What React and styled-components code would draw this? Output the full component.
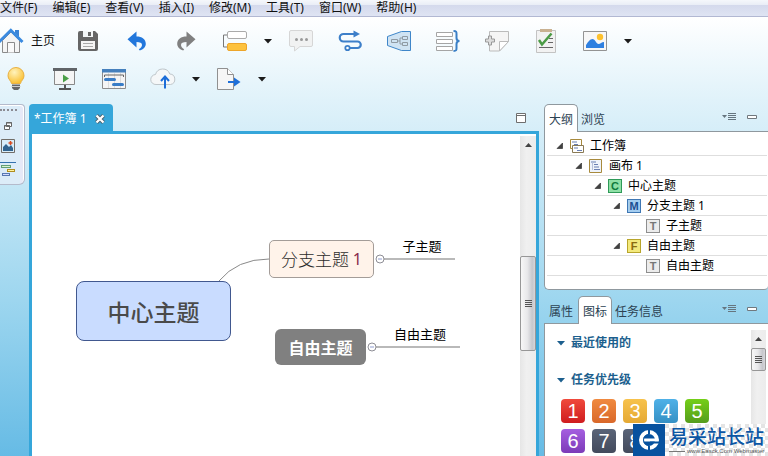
import React from "react";
import styled, { createGlobalStyle, css } from "styled-components";

const UI_FONT = '"Noto Sans", "Noto Sans CJK SC", sans-serif';
const CJK_FONT = '"Noto Sans CJK SC", "Noto Sans", sans-serif';
const ACCENT = "#35a6da";

const GlobalStyle = createGlobalStyle`
  *, *::before, *::after { box-sizing: border-box; }
  body { margin: 0; font: 12px/16px ${UI_FONT}; color: #111; overflow: hidden; }
  button { font: inherit; color: inherit; background: none; border: 0; padding: 0; margin: 0; white-space: nowrap; }
  ul { list-style: none; margin: 0; padding: 0; }
  h2 { margin: 0; }
  svg { display: block; flex: none; }
`;

const Window = styled.div`
  position: relative;
  display: flex;
  flex-direction: column;
  height: 100vh;
  overflow: hidden;
  background: linear-gradient(#ffffff 17px, #e0f2fa 100px, #9dd6ef 66%, #66bbe5);
`;

/* ---------- menu and toolbars ---------- */

const MenuBar = styled.nav`
  display: flex;
  gap: 15px;
  height: 17px;
  flex: none;
  overflow: hidden;
  background: linear-gradient(#f5f7fb, #e9edf6 5px, #d4d9ec 5px, #dfe4f3);
  border-bottom: 1px solid #b2b8d2;
`;

const MenuItem = styled.button`
  height: 16px;
  line-height: 16px;
`;

const Toolbars = styled.div`
  display: flex;
  flex-direction: column;
  flex: none;
  padding: 5px 0 6px;
`;

const ToolRow = styled.div`
  display: flex;
  align-items: center;
  gap: 25px;
  height: 38px;
  padding-left: ${(p) => p.$inset}px;
`;

const ToolButton = styled.button`
  display: flex;
  align-items: center;
  justify-content: center;
  width: 24px;
  height: 26px;
`;

const HomeButton = styled.button`
  display: flex;
  align-items: center;
  gap: 7px;
  height: 26px;
  width: 51px;
  flex: none;
`;

const SplitButton = styled.div`
  display: flex;
  align-items: center;
  gap: 17px;
  margin-right: -8px;
`;

const ArrowButton = styled.button`
  display: flex;
  align-items: center;
  justify-content: center;
  width: 8px;
  height: 26px;
`;

/* ---------- workspace ---------- */

const Workspace = styled.main`
  display: grid;
  grid-template-columns: 25px minmax(0, 1fr) 224px;
  flex: 1;
  min-height: 0;
`;

const Rail = styled.aside`
  display: flex;
  flex-direction: column;
  align-self: start;
  gap: 9px;
  padding: 4px 0 7px;
  background: linear-gradient(90deg, #dcecf8 20px, #e6e9f7 20px);
  border: 1px solid #b4bacb;
  border-left: 0;
  border-radius: 0 4px 6px 0;
  box-shadow: inset -1px 1px 0 #fff;
`;

const Grip = styled.div`
  width: 17px;
  height: 4px;
  border-top: 2px dotted #8b8b93;
`;

const RailButton = styled.button`
  display: flex;
  align-items: center;
  justify-content: center;
  width: 16px;
  height: ${(p) => p.$h}px;
`;

const Column = styled.section`
  display: flex;
  flex-direction: column;
  min-width: 0;
  min-height: 0;
`;

const EditorColumn = styled(Column)`
  padding: 0 5px 0 4px;
`;

const EditorTabs = styled.div`
  display: flex;
  justify-content: space-between;
  align-items: center;
  height: 27px;
  flex: none;
  padding-right: 13px;
`;

const EditorTab = styled.div`
  display: flex;
  align-items: center;
  gap: 8px;
  height: 27px;
  padding: 2px 8px 0 5px;
  border-radius: 4px 4px 0 0;
  background: ${ACCENT};
  color: #fff;
`;

const IconButton = styled.button`
  display: flex;
  align-items: center;
  justify-content: center;
`;

const EditorFrame = styled.div`
  display: flex;
  flex: 1;
  min-height: 0;
  background: #fff;
  border: 3px solid ${ACCENT};
  border-bottom: 0;
`;

const Canvas = styled.div`
  position: relative;
  flex: 1;
  min-width: 0;
  overflow: hidden;
  font-family: ${CJK_FONT};
`;

const Links = styled.svg`
  position: absolute;
  left: 0;
  top: 0;
`;

const nodeKinds = {
  central: css`
    background: #c9dcff;
    border: 1px solid #41588f;
    border-radius: 8px;
    color: #4a4a4a;
    font: 500 23px/32px ${CJK_FONT};
  `,
  branch: css`
    background: #fff3ea;
    border: 1px solid #a39c98;
    border-radius: 5px;
    color: #2c2c2c;
    font: 300 17px/24px ${CJK_FONT};
  `,
  floating: css`
    background: #808080;
    border-radius: 6px;
    color: #fff;
    font: 700 16px/24px ${CJK_FONT};
  `,
  leaf: css`
    color: #000;
    font: 400 13px/18px ${CJK_FONT};
  `,
};

const Node = styled.div`
  position: absolute;
  left: ${(p) => p.$x}px;
  top: ${(p) => p.$y}px;
  width: ${(p) => p.$w}px;
  height: ${(p) => p.$h}px;
  display: flex;
  align-items: center;
  justify-content: center;
  white-space: pre;
  ${(p) => nodeKinds[p.$kind]}
`;

const Numeral = styled.span`
  color: #8a2c4c;
  font: 400 16px/24px "Noto Sans", sans-serif;
`;

const ScrollTrack = styled.div`
  display: flex;
  flex-direction: column;
  align-items: center;
  flex: none;
  width: ${(p) => p.$w}px;
  margin-top: 2px;
  background: linear-gradient(90deg, #e6e6e6, #f0f0f0 40%, #ececec);
`;

const ScrollArrow = styled.button`
  display: flex;
  align-items: center;
  justify-content: center;
  width: 100%;
  height: 18px;
  flex: none;
`;

const ScrollThumb = styled.div`
  display: flex;
  align-items: center;
  justify-content: center;
  width: 100%;
  height: ${(p) => p.$h}px;
  margin-top: ${(p) => p.$gap}px;
  flex: none;
  border: 1px solid #979797;
  border-radius: 2px;
  background: linear-gradient(90deg, #f7f7f7, #e8e8ea 45%, #c6c7cc 80%, #d6d6da);
`;

/* ---------- side views ---------- */

const SideColumn = styled(Column)`
  gap: 6px;
`;

const View = styled.div`
  display: flex;
  flex-direction: column;
  min-height: 0;
  flex: ${(p) => (p.$fill ? 1 : "none")};
`;

const ViewHeader = styled.div`
  display: flex;
  align-items: stretch;
  height: 28px;
  flex: none;
  margin-bottom: -1px;
  color: #2c4252;
`;

const ViewTab = styled.button`
  height: 28px;
  padding: 3px ${(p) => p.$pad}px 0;
  border: 1px solid transparent;
  border-width: 1px ${(p) => (p.$active ? 1 : 0)}px 0;
  ${(p) =>
    p.$active &&
    css`
      background: #fff;
      border-color: #8f989e;
      border-radius: 5px 5px 0 0;
      position: relative;
      z-index: 1;
    `}
`;

const ViewTools = styled.div`
  display: flex;
  align-items: center;
  gap: 11px;
  margin-left: auto;
  padding: 0 11px 2px 0;
`;

const ViewBody = styled.div`
  display: flex;
  min-height: 0;
  flex: ${(p) => (p.$fill ? 1 : "none")};
  background: #fff;
  border: 1px solid #8f989e;
  border-right: 0;
  border-bottom-width: ${(p) => (p.$fill ? 0 : 1)}px;
  border-radius: ${(p) => (p.$fill ? "0" : "0 0 4px 5px")};
  padding: ${(p) => (p.$fill ? "4px 2px 0 0" : "4px 1px 13px 2px")};
`;

const Tree = styled.ul`
  flex: 1;
  color: #000;
`;

const TreeRow = styled.li`
  display: flex;
  align-items: center;
  height: 20px;
  padding-left: ${(p) => 9 + p.$level * 19}px;
  border-bottom: 1px solid #dedede;
`;

const Twisty = styled.span`
  display: flex;
  width: 14px;
`;

const TreeIcon = styled.span`
  display: flex;
  width: 20px;
`;

const tagColors = {
  C: ["#8fe0a6", "#2f9a58", "#0e7a3c"],
  M: ["#a4cdf0", "#3f77b3", "#1c4f92"],
  F: ["#f3e97c", "#b8a52c", "#8a6a10"],
  T: ["#ececec", "#8e8e8e", "#777777"],
};

const Tag = styled.b`
  width: 14px;
  height: 14px;
  border: 1px solid ${(p) => tagColors[p.$t][1]};
  background: ${(p) => tagColors[p.$t][0]};
  color: ${(p) => tagColors[p.$t][2]};
  font: 700 11px/12px "Liberation Sans", sans-serif;
  text-align: center;
`;

const MarkerList = styled.div`
  flex: 1;
  min-width: 0;
  padding: 7px 0 0 12px;
  overflow: hidden;
`;

const MarkerHeading = styled.h2`
  display: flex;
  align-items: center;
  gap: 6px;
  height: 16px;
  margin-bottom: ${(p) => p.$gap}px;
  color: #1c5f8e;
  font: 700 12px/16px ${UI_FONT};
`;

const Markers = styled.div`
  display: grid;
  grid-template-columns: repeat(5, 24px);
  gap: 6px 7px;
  padding-left: 4px;
`;

const Marker = styled.button`
  width: 24px;
  height: 24px;
  border-radius: 4px;
  background: linear-gradient(${(p) => p.$from}, ${(p) => p.$to});
  color: #fff;
  font: 400 20px/24px "Liberation Sans", sans-serif;
`;

const Brand = styled.div`
  position: absolute;
  right: 0;
  bottom: 0;
  z-index: 2;
  display: flex;
  height: 32px;
`;

const BrandText = styled.div`
  width: 103px;
  padding-left: 4px;
  background: repeating-conic-gradient(#ffffff 0 25%, #e4e4e4 0 50%) 0 0 / 8px 8px;
  white-space: nowrap;
`;

const BrandName = styled.div`
  color: #0b56a4;
  font: 500 19px/23px ${CJK_FONT};
`;

const BrandUrl = styled.div`
  display: flex;
  align-items: center;
  gap: 2px;
  color: #555;
  font: 6px/8px "Liberation Sans", sans-serif;

  &::before {
    content: "";
    width: 16px;
    height: 1px;
    background: #777;
  }
`;

/* ---------- icons ---------- */

const Caret = ({ color = "#1b1b1b" }) => (
  <svg width="8" height="5" viewBox="0 0 8 5"><path d="M0 0h8L4 4.5z" fill={color} /></svg>
);

const HomeIcon = () => (
  <svg width="24" height="26" viewBox="0 0 24 26">
    <path d="M2.500 12.500 11 4l8.500 8.500V24.500h-17z" fill="#f4f4f4" stroke="#8b8b8b" />
    <path d="M7.500 24.500v-10h7v10" fill="#fafafa" stroke="#8b8b8b" />
    <path d="M15 2h4v7l-4-4z" fill="#3b84d6" />
    <path d="M-1 14 10.800 2.300 22.500 14" fill="none" stroke="#3a8ae0" strokeWidth="3" />
  </svg>
);

const SaveIcon = () => (
  <svg width="20" height="20" viewBox="0 0 20 20">
    <path d="M2 0h15l3 3v15a2 2 0 0 1-2 2H2a2 2 0 0 1-2-2V2a2 2 0 0 1 2-2z" fill="#666" />
    <path d="M5 0h10v6H5z" fill="#f3f6f7" /><path d="M10 1h3v4h-3z" fill="#666" />
    <path d="M3 10h14v8H3z" fill="#f5f5f5" /><path d="M5 12.500h10M5 15.500h10" stroke="#aaa" />
  </svg>
);

const UndoIcon = ({ color, flip }) => (
  <svg width="20" height="20" viewBox="0 0 20 20">
    <path
      transform={flip ? "translate(20 0) scale(-1 1)" : undefined}
      d="M9.500.5v5c5.500 0 9.300 2.700 9.300 7.300 0 3.200-2.500 5.900-6 6.700l-1-1.200c2.200-1.300 3.200-2.800 3.200-4.300 0-2.200-2-3-5.500-3v5.500L.5 8.300z"
      fill={color}
    />
  </svg>
);

const TopicIcon = () => (
  <svg width="24" height="22" viewBox="0 0 24 22">
    <path d="M5 5H.5v12H5" fill="none" stroke="#777" />
    <rect x="4.500" y="1.500" width="19" height="7" rx="1.500" fill="#fff" stroke="#aaa" />
    <rect x="4.500" y="13.500" width="19" height="7" rx="1.500" fill="#fdc23e" stroke="#eda52a" />
  </svg>
);

const CommentIcon = () => (
  <svg width="24" height="22" viewBox="0 0 24 22">
    <path d="M2 .5h20a1.500 1.500 0 0 1 1.500 1.500v13a1.500 1.500 0 0 1-1.500 1.500H11L5.500 21v-4.500H2A1.500 1.500 0 0 1 .5 15V2A1.500 1.500 0 0 1 2 .5z" fill="#f1f2f2" stroke="#d6d6d6" />
    <g fill="#999"><circle cx="7.500" cy="9.500" r="1.500" /><circle cx="12.500" cy="9.500" r="1.500" /><circle cx="17.500" cy="9.500" r="1.500" /></g>
  </svg>
);

const RelationIcon = () => (
  <svg width="24" height="22" viewBox="0 0 24 22">
    <path d="M17 4H5.500a3.500 3.500 0 0 0 0 7.500h14a3 3 0 0 1 0 6.500H12" fill="none" stroke="#3d7fc9" strokeWidth="2.200" />
    <path d="M15.500.5 22 4l-6.500 3.500z" fill="#3d7fc9" />
    <circle cx="9.500" cy="18" r="2.200" fill="#fff" stroke="#3d7fc9" strokeWidth="1.800" />
  </svg>
);

const BoundaryIcon = () => (
  <svg width="24" height="20" viewBox="0 0 24 20">
    <path d="M.5 5.500 14.500.5h9v19h-9l-14-5z" fill="#cfe3f3" stroke="#3f86c9" />
    <path d="M4.500 8.500h6v3h-6zM15.500 5.500h5v3h-5zM15.500 11.500h5v3h-5zM10.500 10h2.500M15.500 7H13v6h2.500" fill="none" stroke="#8f9aa3" />
  </svg>
);

const SummaryIcon = () => (
  <svg width="25" height="22" viewBox="0 0 25 22">
    <path d="M.5 2.500h16v4H.5zM.5 9.500h16v4H.5zM.5 16.500h16v4H.5z" fill="#fff" stroke="#a5a5a5" />
    <path d="M17.500 1c3 0 3 1 3 3v4q0 3 3 3-3 0-3 3v4c0 2 0 3-3 3" fill="none" stroke="#3a7fc6" strokeWidth="2" />
  </svg>
);

const NoteIcon = () => (
  <svg width="24" height="21" viewBox="0 0 24 21">
    <path d="M4.500.5h19v10l-9 9.500h-10z" fill="#f5f5f5" stroke="#bbb" />
    <path d="M14.500 20V10.500h9z" fill="#fff" stroke="#bbb" />
    <path d="M3.500 5v3h-3v3h3v3h3v-3h3V8h-3V5z" fill="#ddd" stroke="#999" />
  </svg>
);

const TaskIcon = () => (
  <svg width="20" height="26" viewBox="0 0 20 26">
    <path d="M.5 2.500h19v22H.5z" fill="#f2f2f2" stroke="#c3c3c3" />
    <path d="M4 1h12v3H4z" fill="#c9b191" />
    <path d="m3 12 3 4.500 9.500-11" fill="none" stroke="#4b9b45" strokeWidth="2.500" />
    <path d="M13 10.500h4M12 14.500h5M3 19.500h14" stroke="#666" />
  </svg>
);

const ImageIcon = () => (
  <svg width="24" height="20" viewBox="0 0 24 20">
    <path d="M.5.5h23v19H.5z" fill="#f7f7f7" stroke="#939393" />
    <path d="M3 17v-3c2-3 4-6 6.500-6s4 5 6 5 3-2 5.500-2v6z" fill="#2f80e0" />
    <circle cx="17" cy="6" r="3.200" fill="#fdc12e" />
  </svg>
);

const BulbIcon = () => (
  <svg width="18" height="24" viewBox="0 0 18 24">
    <defs>
      <radialGradient id="glow" cx=".4" cy=".3" r=".8"><stop offset="0" stopColor="#fff3bd" /><stop offset="1" stopColor="#f9b91f" /></radialGradient>
    </defs>
    <path d="M9 .5a8 8 0 0 1 8 8.300c0 3.500-3 4.800-3.500 7.700h-9C4 13.600 1 12.300 1 8.800A8 8 0 0 1 9 .5z" fill="url(#glow)" stroke="#e8b043" />
    <path d="M5 17.500h8v3.500l-2 2H7l-2-2z" fill="#666" /><path d="M4.500 19.500h9" stroke="#ccc" />
  </svg>
);

const PresentIcon = () => (
  <svg width="24" height="22" viewBox="0 0 24 22">
    <path d="M1.500 2.500h20v14h-20z" fill="#f5f5f5" stroke="#888" />
    <path d="M0 0h24v3H0z" fill="#606468" /><path d="m10 6.500 6 4-6 4z" fill="#4c9f48" />
    <path d="M12 17v4M6 21h12" stroke="#555" strokeWidth="2" />
  </svg>
);

const GanttIcon = () => (
  <svg width="24" height="20" viewBox="0 0 24 20">
    <path d="M.5.5h23v19H.5z" fill="#f5f5f5" stroke="#8c8c8c" />
    <path d="M6.500 4v15M12.500 4v15M18.500 4v15" stroke="#ddd" />
    <path d="M0 0h24v3.500H0z" fill="#4580bd" /><path d="M2.500 8V6h19v2" fill="none" stroke="#666" />
    <path d="M3.500 10.500h9M11.500 15.500h9" stroke="#397dc7" strokeWidth="3" strokeLinecap="round" />
  </svg>
);

const CloudIcon = () => (
  <svg width="26" height="22" viewBox="0 0 26 22">
    <path d="M6 16.500a5 5 0 0 1-.5-10A7.500 7.500 0 0 1 19.800 6a5.300 5.300 0 0 1 .7 10.500z" fill="#f5f7f8" stroke="#bfc6ca" />
    <path d="M15 8.500v12M11 13l4-4.500 4 4.500" fill="none" stroke="#1c6dd8" strokeWidth="2" />
  </svg>
);

const ExportIcon = () => (
  <svg width="24" height="22" viewBox="0 0 24 22">
    <path d="M.5.5h10l6 6v15H.5z" fill="#f6f6f6" stroke="#909090" /><path d="M10.500.5v6h6" fill="#fff" stroke="#909090" />
    <path d="M11 14h8" stroke="#1f6fd8" strokeWidth="2" /><path d="m17 9.500 6.500 4.500-6.500 4.500z" fill="#1f6fd8" />
  </svg>
);

const RestoreIcon = () => (
  <svg width="8" height="8" viewBox="0 0 8 8" fill="#fff" stroke="#666"><path d="M2.500.5h5v4h-5zM.5 3.500h5v4h-5z" /><path d="M2 1h6M0 4h6" /></svg>
);

const PictureIcon = () => (
  <svg width="14" height="14" viewBox="0 0 14 14">
    <path d="M.5.500h13v13H.5z" fill="#d9edf9" stroke="#716d68" /><path d="M2 12V8l3-3 3 3 2-2 2 3v3z" fill="#32648f" />
    <path d="M9.500 2v4M7.500 4h4" stroke="#d84a21" strokeWidth="1.500" />
  </svg>
);

const OutlineIcon = () => (
  <svg width="16" height="15" viewBox="0 0 16 15">
    <path d="M0 .5h16" stroke="#3472ae" /><rect x="1.500" y="3.500" width="9" height="2" fill="#d9f4cc" stroke="#629e76" />
    <rect x="7.500" y="7.500" width="7" height="2" fill="#fff3a0" stroke="#b18d1e" /><rect x="2.500" y="11.500" width="7" height="2" fill="#d4dcff" stroke="#5878b1" />
  </svg>
);

const CloseIcon = () => (
  <svg width="10" height="10" viewBox="0 0 10 10"><path d="m1.500 1.500 7 7m0-7-7 7" stroke="#4d6470" strokeWidth="4" /><path d="m1.500 1.500 7 7m0-7-7 7" stroke="#fff" strokeWidth="2.200" /></svg>
);

const MaximizeIcon = () => (
  <svg width="10" height="10" viewBox="0 0 10 10"><path d="M.5.5h9v9h-9z" fill="#fff" stroke="#6e6e6e" /><path d="M0 2.500h10" stroke="#6e6e6e" /></svg>
);

const ViewMenuIcon = () => (
  <svg width="14" height="8" viewBox="0 0 14 8"><path d="M0 2h5L2.500 5z" fill="#66757f" /><path d="M6 .5h8M6 2.500h8M6 4.500h8M6 6.500h8" stroke="#66757f" /></svg>
);

const MinimizeIcon = () => (
  <svg width="10" height="4" viewBox="0 0 10 4"><path d="M.5.5h9v3h-9z" fill="#fff" stroke="#70787e" /></svg>
);

const UpIcon = () => (
  <svg width="7" height="4" viewBox="0 0 7 4"><path d="M0 4h7L3.500 0z" fill="#444" /></svg>
);

const ThumbGrip = () => (
  <svg width="7" height="8" viewBox="0 0 7 8"><path d="M0 .5h7M0 2.500h7M0 4.500h7M0 6.500h7" stroke="#555" /></svg>
);

const OpenTwisty = () => (
  <svg width="7" height="7" viewBox="0 0 7 7"><path d="M6.500 1v5.500H1z" fill="#404040" stroke="#222" strokeWidth=".6" /></svg>
);

const BookIcon = () => (
  <svg width="14" height="14" viewBox="0 0 14 14">
    <path d="M.5.5h11v9H.5z" fill="#fff" stroke="#a88a3d" /><path d="M2 3h5M4 5.500h4" stroke="#697fb3" />
    <path d="M2.500 6.500h11v7h-11z" fill="#fff" stroke="#8a7a55" /><path d="M4 9h4M7 11.500h5" stroke="#697fb3" />
  </svg>
);

const SheetIcon = () => (
  <svg width="13" height="14" viewBox="0 0 13 14">
    <path d="M.5.5h12v13H.5z" fill="#eef3fb" stroke="#a88a3d" /><path d="M2 3h5M5 5.500h4M5 8h5M5 10.500h6" stroke="#697fb3" /><path d="M3.500 3v8" stroke="#b5c0da" />
  </svg>
);

const BrandIcon = () => (
  <svg width="32" height="32" viewBox="0 0 32 32">
    <path d="M0 0h32v32H0z" fill="#07529f" />
    <circle cx="16" cy="16" r="8" fill="none" stroke="#fff" strokeWidth="4" />
    <path d="M16 5v5M16 22v5" stroke="#07529f" strokeWidth="2" />
    <path d="M10 16h15" stroke="#fff" strokeWidth="3" />
    <path d="M17 18.500h10" stroke="#07529f" strokeWidth="2" />
    <path d="M16 10.500a5.500 5.500 0 0 0 0 11" fill="none" stroke="#07529f" />
  </svg>
);

/* ---------- data ---------- */

const menus = ["文件(F)", "编辑(E)", "查看(V)", "插入(I)", "修改(M)", "工具(T)", "窗口(W)", "帮助(H)"];

const topTools = [
  ["保存", <SaveIcon />],
  ["撤销", <UndoIcon color="#2277dc" />],
  ["重做", <UndoIcon color="#808080" flip />],
  ["主题", <TopicIcon />, true],
  ["批注", <CommentIcon />],
  ["联系", <RelationIcon />],
  ["外框", <BoundaryIcon />],
  ["概要", <SummaryIcon />],
  ["备注", <NoteIcon />],
  ["任务", <TaskIcon />],
  ["图片", <ImageIcon />, true],
];

const bottomTools = [
  ["头脑风暴", <BulbIcon />],
  ["演示", <PresentIcon />],
  ["甘特图", <GanttIcon />],
  ["上传", <CloudIcon />, true],
  ["导出", <ExportIcon />, true],
];

const outline = [
  { level: 0, text: "工作簿", icon: <BookIcon />, open: true },
  { level: 1, text: "画布 1", icon: <SheetIcon />, open: true },
  { level: 2, text: "中心主题", tag: "C", open: true },
  { level: 3, text: "分支主题 1", tag: "M", open: true },
  { level: 4, text: "子主题", tag: "T" },
  { level: 3, text: "自由主题", tag: "F", open: true },
  { level: 4, text: "自由主题", tag: "T" },
];

const priorities = [
  ["#f04a3c", "#cf1c1f"],
  ["#f08a40", "#d9682a"],
  ["#f7c24c", "#e5a934"],
  ["#4fb1e8", "#3590c4"],
  ["#74cf18", "#559c1c"],
  ["#a55fe0", "#7c3bb8"],
  ["#5a6478", "#434a5c"],
  ["#5a6478", "#434a5c"],
];

const Tool = ({ label, icon, menu }) => {
  const main = <ToolButton aria-label={label}>{icon}</ToolButton>;
  if (!menu) return main;
  return (
    <SplitButton>
      {main}
      <ArrowButton aria-label={`${label}菜单`}><Caret /></ArrowButton>
    </SplitButton>
  );
};

const Tools = ({ items }) => items.map(([label, icon, menu]) => <Tool key={label} label={label} icon={icon} menu={menu} />);

const SideHeader = ({ tabs, active }) => (
  <ViewHeader role="tablist">
    {tabs.map((t, i) => (
      <ViewTab key={t} role="tab" aria-selected={t === active} $active={t === active} $pad={i === 0 && t !== active ? 5 : t === active ? 4 : 3}>{t}</ViewTab>
    ))}
    <ViewTools>
      <IconButton aria-label="视图菜单"><ViewMenuIcon /></IconButton>
      <IconButton aria-label="最小化"><MinimizeIcon /></IconButton>
    </ViewTools>
  </ViewHeader>
);

const MindMap = () => (
  <Canvas>
    <Links width="488" height="322" viewBox="0 0 488 322" fill="none">
      <path d="M187 147Q205 125 237 125" stroke="#8a8a8a" />
      <path d="M352 125H423M344 213H428" stroke="#b9b9b9" strokeWidth="2" />
      <g stroke="#8e8e96" fill="#fff">
        <circle cx="348" cy="125" r="4" /><circle cx="340" cy="213" r="4" />
      </g>
      <path d="M346 125h4M338 213h4" stroke="#8f9cd0" />
    </Links>
    <Node $kind="central" $x={44} $y={147} $w={155} $h={60}>中心主题</Node>
    <Node $kind="branch" $x={237} $y={106} $w={105} $h={38}>分支主题 <Numeral>1</Numeral></Node>
    <Node $kind="leaf" $x={362} $y={103} $w={56} $h={18}>子主题</Node>
    <Node $kind="floating" $x={243} $y={195} $w={91} $h={36}>自由主题</Node>
    <Node $kind="leaf" $x={354} $y={191} $w={68} $h={18}>自由主题</Node>
  </Canvas>
);

export default function App() {
  return (
    <Window>
      <GlobalStyle />
      <MenuBar>{menus.map((m) => <MenuItem key={m}>{m}</MenuItem>)}</MenuBar>
      <Toolbars>
        <ToolRow $inset={0}>
          <HomeButton><HomeIcon />主页</HomeButton>
          <Tools items={topTools} />
        </ToolRow>
        <ToolRow $inset={4}><Tools items={bottomTools} /></ToolRow>
      </Toolbars>

      <Workspace>
        <Rail>
          <Grip />
          <RailButton $h={8} aria-label="还原"><RestoreIcon /></RailButton>
          <RailButton $h={14} aria-label="图片视图"><PictureIcon /></RailButton>
          <RailButton $h={15} aria-label="大纲视图"><OutlineIcon /></RailButton>
        </Rail>

        <EditorColumn>
          <EditorTabs>
            <EditorTab>
              <span>*工作簿 1</span>
              <IconButton aria-label="关闭"><CloseIcon /></IconButton>
            </EditorTab>
            <IconButton aria-label="最大化"><MaximizeIcon /></IconButton>
          </EditorTabs>
          <EditorFrame>
            <MindMap />
            <ScrollTrack $w={16}>
              <ScrollArrow aria-label="向上滚动"><UpIcon /></ScrollArrow>
              <ScrollThumb $h={95} $gap={102}><ThumbGrip /></ScrollThumb>
            </ScrollTrack>
          </EditorFrame>
        </EditorColumn>

        <SideColumn>
          <View>
            <SideHeader tabs={["大纲", "浏览"]} active="大纲" />
            <ViewBody>
              <Tree>
                {outline.map((r, i) => (
                  <TreeRow key={i} $level={r.level}>
                    <Twisty>{r.open && <OpenTwisty />}</Twisty>
                    <TreeIcon>{r.tag ? <Tag $t={r.tag}>{r.tag}</Tag> : r.icon}</TreeIcon>
                    {r.text}
                  </TreeRow>
                ))}
              </Tree>
            </ViewBody>
          </View>
          <View $fill>
            <SideHeader tabs={["属性", "图标", "任务信息"]} active="图标" />
            <ViewBody $fill>
              <MarkerList>
                <MarkerHeading $gap={21}><Caret color="#1c5f8e" />最近使用的</MarkerHeading>
                <MarkerHeading $gap={11}><Caret color="#1c5f8e" />任务优先级</MarkerHeading>
                <Markers>
                  {priorities.map(([from, to], i) => (
                    <Marker key={i} $from={from} $to={to}>{i + 1}</Marker>
                  ))}
                </Markers>
              </MarkerList>
              <ScrollTrack $w={15}>
                <ScrollArrow aria-label="向上滚动"><UpIcon /></ScrollArrow>
                <ScrollThumb $h={23} $gap={0}><ThumbGrip /></ScrollThumb>
              </ScrollTrack>
            </ViewBody>
          </View>
        </SideColumn>
      </Workspace>

      <Brand>
        <BrandIcon />
        <BrandText>
          <BrandName>易采站长站</BrandName>
          <BrandUrl>www.Easck.Com Webmaster</BrandUrl>
        </BrandText>
      </Brand>
    </Window>
  );
}
